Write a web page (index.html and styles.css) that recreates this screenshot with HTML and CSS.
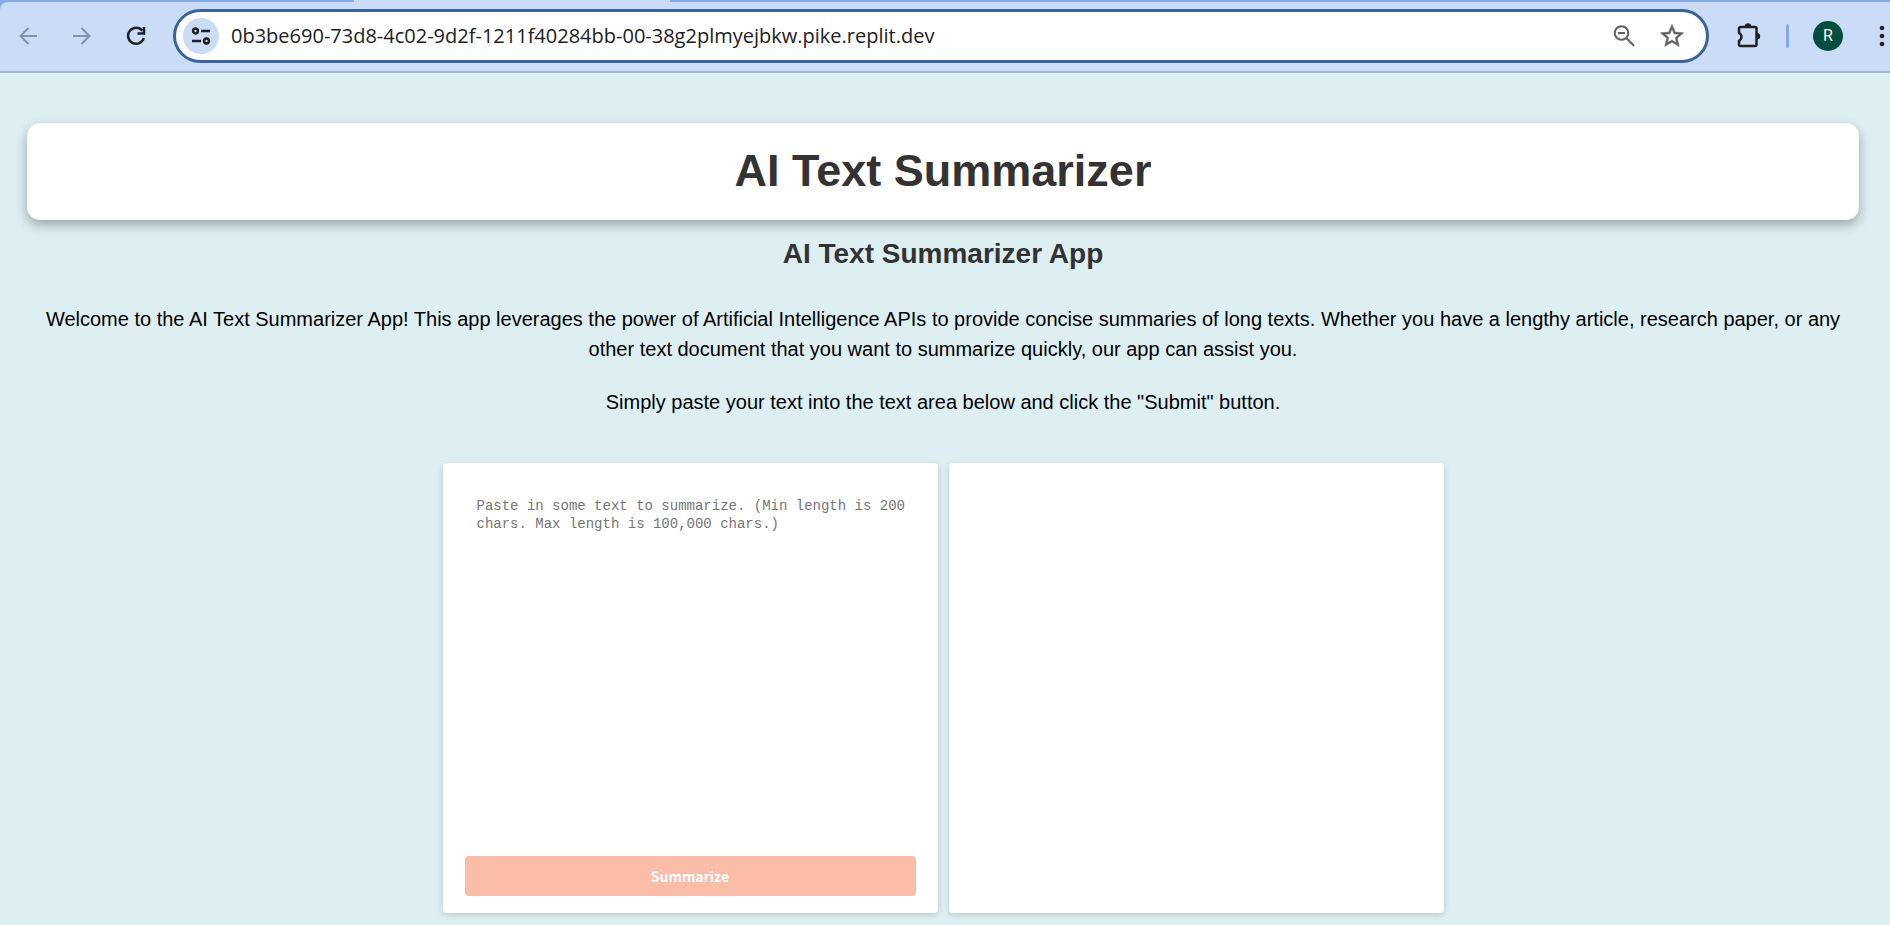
FILE: index.html
```
<!DOCTYPE html>
<html lang="en">
<head>
<meta charset="utf-8">
<title>AI Text Summarizer</title>
<link rel="stylesheet" href="styles.css">
</head>
<body>
<header class="browser">
  <div class="tabstrip"><span class="tab-left"></span><span class="tab-active"></span><span class="tab-rest"></span></div>
  <nav class="toolbar" aria-label="Browser toolbar">
    <button class="tool muted" aria-label="Back"><svg width="18" height="18" viewBox="0 0 18 18"><path d="M18 9H1.500M9.500 1L1.500 9l8 8"/></svg></button>
    <button class="tool muted" aria-label="Forward"><svg width="18" height="18" viewBox="0 0 18 18"><path d="M0 9h16.500M8.500 1l8 8-8 8"/></svg></button>
    <button class="tool" aria-label="Reload"><svg class="heavy" width="20" height="20" viewBox="0 0 20 20"><path d="M16.200 4.600A8 8 0 1 0 17.800 12M18 1v6.500h-6.500"/></svg></button>
    <div class="omnibox">
      <button class="site-info" aria-label="View site information"><svg class="heavy" width="20" height="18" viewBox="0 0 20 18"><circle cx="4.500" cy="4" r="2.400"/><path d="M10 4h9M1 14h9"/><circle cx="15.500" cy="14" r="2.400"/></svg></button>
      <input class="url" type="text" aria-label="Address" value="0b3be690-73d8-4c02-9d2f-1211f40284bb-00-38g2plmyejbkw.pike.replit.dev">
      <button class="action" aria-label="Zoom"><svg width="22" height="22" viewBox="0 0 22 22"><circle cx="8.500" cy="8" r="6.800"/><path d="M5 8h7M13.300 13l7.700 7.700"/></svg></button>
      <button class="action" aria-label="Bookmark this page"><svg width="28" height="28" viewBox="0 0 24 24"><path class="star" d="M22 9.240l-7.190-.62L12 2 9.190 8.630 2 9.240l5.460 4.730L5.820 21 12 17.270 18.180 21l-1.630-7.030L22 9.240zM12 15.400l-3.760 2.270 1-4.280-3.320-2.880 4.380-.38L12 6.100l1.710 4.040 4.380.38-3.320 2.880 1 4.280L12 15.400z"/></svg></button>
    </div>
    <button class="tool extensions" aria-label="Extensions"><svg class="heavy" width="26" height="26" viewBox="0 1 26 26"><path d="M3 6.500A1.500 1.500 0 0 1 4.500 5H19a1.500 1.500 0 0 1 1.500 1.500V22.500a1.500 1.500 0 0 1-1.500 1.500H4.500A1.500 1.500 0 0 1 3 22.500v-3.700a4.500 4.500 0 0 0 0-8z"/><path class="solid" d="M8.800 4.500a3.200 3.200 0 0 1 6.400 0zM21 11a3.200 3.200 0 0 1 0 6.400z"/></svg></button>
    <span class="divider"></span>
    <button class="avatar" aria-label="Profile">R</button>
    <button class="menu" aria-label="Menu"><svg width="6" height="22" viewBox="0 0 6 22"><circle class="solid" cx="3" cy="3" r="2.300"/><circle class="solid" cx="3" cy="11" r="2.300"/><circle class="solid" cx="3" cy="19" r="2.300"/></svg></button>
  </nav>
</header>
<main class="page">
  <div class="banner"><h1>AI Text Summarizer</h1></div>
  <section class="intro">
    <h2>AI Text Summarizer App</h2>
    <p>Welcome to the AI Text Summarizer App! This app leverages the power of Artificial Intelligence APIs to provide concise summaries of long texts. Whether you have a lengthy article, research paper, or any other text document that you want to summarize quickly, our app can assist you.</p>
    <p>Simply paste your text into the text area below and click the "Submit" button.</p>
  </section>
  <div class="panels">
    <form class="panel">
      <textarea class="source" aria-label="Text to summarize" placeholder="Paste in some text to summarize. (Min length is 200 chars. Max length is 100,000 chars.)"></textarea>
      <button class="submit" type="button">Summarize</button>
    </form>
    <section class="panel" aria-label="Summary"></section>
  </div>
</main>
</body>
</html>
```
FILE: styles.css
```
* { box-sizing: border-box; }
body {
  margin: 0;
  min-height: 100vh;
  background: #ddeff2;
  color: #000;
  font-family: "Liberation Sans", Arial, sans-serif;
}
button { border: 0; padding: 0; background: none; font: inherit; color: inherit; }
svg { display: block; fill: none; stroke: currentColor; stroke-width: 2; }
.heavy { stroke-width: 2.5; }
.solid { fill: currentColor; stroke: none; }
.star { fill: currentColor; stroke: currentColor; stroke-width: 0.4; }

.browser { background: #84abe9; border-bottom: 2px solid #a3b4d2; }
.tabstrip { display: flex; height: 2px; }
.tab-left { width: 354px; }
.tab-active { width: 316px; background: #cbdcf6; }
.tab-rest { flex: 1; }
.toolbar {
  display: flex;
  align-items: center;
  height: 69px;
  padding: 0 0 1px 1px;
  background: #cbdcf6;
  border-top-left-radius: 8px;
  color: #1f2125;
}
.tool { display: grid; place-items: center; width: 54px; height: 54px; flex: none; }
.muted { color: #8391aa; }
.omnibox {
  display: flex;
  align-items: center;
  flex: 1;
  height: 54px;
  margin-left: 10px;
  padding: 0 10px 0 7px;
  background: #fff;
  border: 3px solid #3a629c;
  border-radius: 27px;
}
.site-info {
  display: grid;
  place-items: center;
  width: 36px;
  height: 36px;
  border-radius: 50%;
  background: #cbdcf6;
}
.url {
  flex: 1;
  min-width: 0;
  margin-left: 12px;
  padding: 0;
  border: 0;
  outline: 0;
  background: none;
  color: #202124;
  font: 20px/28px "Open Sans", "Noto Sans", sans-serif;
}
.action { display: grid; place-items: center; width: 48px; height: 40px; color: #5f6164; }
.extensions { margin-left: 13px; }
.divider { width: 3px; height: 24px; margin: 0 24px 0 10px; border-radius: 2px; background: #84abe9; }
.avatar {
  width: 30px;
  height: 30px;
  border-radius: 50%;
  background: #034e40;
  color: #fff;
  font: 16px/30px Roboto, sans-serif;
}
.menu { margin: 0 5px 0 36px; }

.page { padding: 50px 31px 12px 27px; }
.banner {
  padding: 21px 22px 23px;
  background: #fff;
  border-radius: 13px;
  box-shadow: 0 5px 12px rgba(0, 0, 0, 0.3);
}
h1, h2 { margin: 0; color: #333; text-align: center; }
h1 { font-size: 45px; line-height: 53px; }
h2 { font-size: 28px; line-height: 34px; }
.intro { padding: 17px 0 0; text-align: center; font-size: 20px; line-height: 30px; }
.intro p { margin: 0; padding-top: 23px; }
.intro h2 + p { padding-top: 33px; }
.panels {
  display: grid;
  grid-template-columns: repeat(2, minmax(0, 495px));
  justify-content: center;
  gap: 11px;
  margin-top: 46px;
}
.panel {
  display: flex;
  flex-direction: column;
  min-height: 450px;
  padding: 22px 22px 17px;
  background: #fff;
  border-radius: 4px;
  box-shadow: 0 2px 6px rgba(0, 0, 0, 0.15);
}
.source {
  flex: 1;
  padding: 12px 4px 12px 12px;
  border: 0;
  outline: 0;
  resize: none;
  background: none;
  font: 14px/18px "Liberation Mono", monospace;
}
.source::placeholder { color: #757575; }
.submit {
  height: 40px;
  border-radius: 4px;
  background: #fabda8;
  color: #fff;
  font: bold 14px/24px "Noto Sans CJK SC", sans-serif;
}
```
